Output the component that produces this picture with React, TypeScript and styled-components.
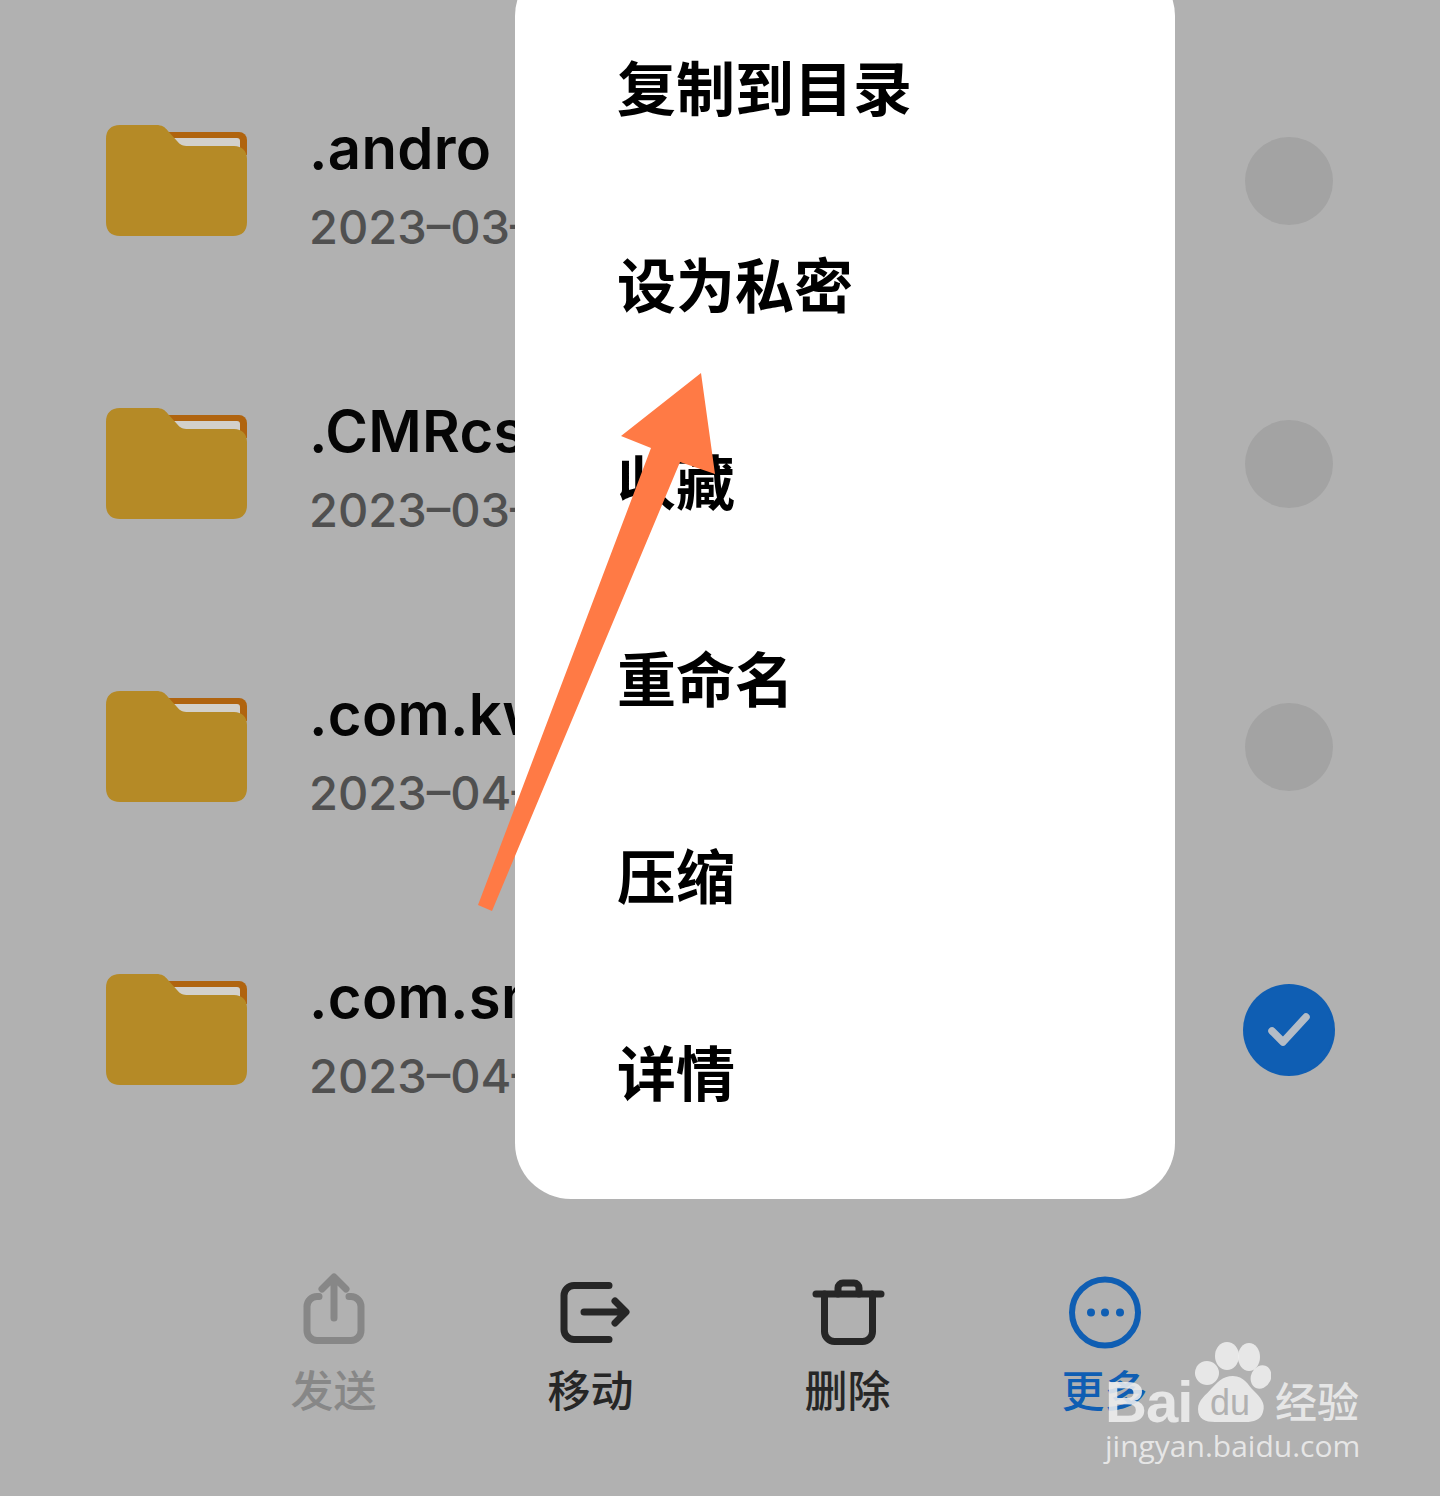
import React from "react";
import styled, { createGlobalStyle } from "styled-components";

const Global = createGlobalStyle`
  html, body { margin: 0; padding: 0; background: #b1b1b1; }
`;

const Screen = styled.div`
  position: relative;
  width: 1440px;
  height: 1496px;
  overflow: hidden;
  background: #b1b1b1;
  display: flex;
  flex-direction: column;
  font-family: Inter, "Noto Sans CJK SC", sans-serif;
`;

const List = styled.div`
  display: flex;
  flex-direction: column;
  padding-top: 39px;
`;

const Row = styled.div`
  height: 283px;
  display: flex;
  align-items: center;
  padding: 0 107px 0 106px;
`;

const FolderIcon = styled.svg`
  width: 141px;
  height: 111px;
  flex: none;
`;

const RowText = styled.div`
  flex: 1;
  margin-left: 62px;
  padding-top: 9px;
  display: flex;
  flex-direction: column;
  gap: 18px;
  white-space: nowrap;
`;

const Name = styled.div`
  font-size: 58px;
  line-height: 66px;
  font-weight: 600;
  letter-spacing: 0.3px;
  color: #050505;
`;

const DateText = styled.div`
  font-size: 47px;
  line-height: 56px;
  font-weight: 500;
  color: #505050;
`;

const Check = styled.div<{ $on?: boolean }>`
  flex: none;
  width: 88px;
  height: 88px;
  border-radius: 50%;
  background: ${(p) => (p.$on ? "#0f5eb3" : "#a3a3a3")};
  box-shadow: ${(p) => (p.$on ? "0 0 0 2px #0f5eb3" : "none")};
  display: flex;
  align-items: center;
  justify-content: center;
`;

const Toolbar = styled.div`
  margin-top: auto;
  padding: 0 0 83px 205px;
  display: flex;
`;

const Tool = styled.div<{ $color: string }>`
  width: 257px;
  display: flex;
  flex-direction: column;
  align-items: center;
  color: ${(p) => p.$color};
`;

const ToolIcon = styled.svg`
  width: 80px;
  height: 80px;
  fill: none;
  stroke: currentColor;
  stroke-width: 7;
  stroke-linecap: round;
  stroke-linejoin: round;
`;

const ToolLabel = styled.div`
  font-family: "Noto Sans CJK SC", sans-serif;
  font-size: 43px;
  line-height: 50px;
  font-weight: 500;
  margin-top: 13px;
`;

const Menu = styled.div`
  position: absolute;
  left: 515px;
  top: -40px;
  width: 660px;
  height: 1239px;
  box-sizing: border-box;
  padding: 27px 0 0 102px;
  background: #fff;
  border-radius: 56px;
  display: flex;
  flex-direction: column;
`;

const MenuItem = styled.div`
  height: 197px;
  display: flex;
  align-items: center;
  font-family: "Noto Sans CJK SC", sans-serif;
  font-size: 59px;
  font-weight: 700;
  color: #000;
`;

const Arrow = styled.svg`
  position: absolute;
  left: 470px;
  top: 365px;
  width: 255px;
  height: 555px;
`;

const Watermark = styled.div`
  position: absolute;
  left: 1105px;
  top: 1340px;
  width: 262px;
  color: rgba(238, 238, 238, 0.88);
  display: flex;
  flex-direction: column;
`;

const Brand = styled.div`
  display: flex;
  align-items: flex-end;
  height: 84px;
`;

const BrandLatin = styled.span`
  font-family: "Liberation Sans", sans-serif;
  font-weight: 700;
  font-size: 58px;
  line-height: 44px;
  letter-spacing: -1px;
  width: 90px;
  flex: none;
`;

const Paw = styled.svg`
  width: 76px;
  height: 84px;
  flex: none;
  margin-right: 4px;
`;

const BrandCjk = styled.span`
  font-family: "Noto Sans CJK SC", sans-serif;
  font-weight: 500;
  font-size: 42px;
  line-height: 48px;
  white-space: nowrap;
`;

const Domain = styled.div`
  font-family: "Open Sans", sans-serif;
  font-size: 30px;
  line-height: 40px;
  margin-top: 2px;
  white-space: nowrap;
`;

const Folder = () => (
  <FolderIcon viewBox="0 0 141 111">
    <path d="M55 7H133a8 8 0 0 1 8 8V30H55Z" fill="#b0640f" />
    <path d="M60 13H131a3 3 0 0 1 3 3V24H70Z" fill="#d2d0cb" />
    <path
      d="M14 0H50c6 0 9 2 12 6l9 10c3 4 6 5 11 5H128c8 0 13 5 13 13V97c0 9-5 14-14 14H14C5 111 0 106 0 97V14C0 5 5 0 14 0Z"
      fill="#b58a26"
    />
  </FolderIcon>
);

const rows = [
  { name: ".andro", date: "2023–03–28" },
  { name: ".CMRcs", date: "2023–03–28" },
  { name: ".com.kwai", date: "2023–04–02" },
  { name: ".com.smile", date: "2023–04–02", on: true },
];

const items = ["复制到目录", "设为私密", "收藏", "重命名", "压缩", "详情"];

export default function App() {
  return (
    <Screen>
      <Global />
      <List>
        {rows.map((r) => (
          <Row key={r.name}>
            <Folder />
            <RowText>
              <Name>{r.name}</Name>
              <DateText>{r.date}</DateText>
            </RowText>
            <Check $on={r.on}>
              {r.on && (
                <svg width="44" height="36" viewBox="0 0 44 36" fill="none">
                  <path
                    d="M5 19L16 30L39 5"
                    stroke="#b4bcc6"
                    strokeWidth="7.5"
                    strokeLinecap="round"
                    strokeLinejoin="round"
                  />
                </svg>
              )}
            </Check>
          </Row>
        ))}
      </List>

      <Toolbar>
        <Tool $color="#878787">
          <ToolIcon viewBox="0 0 80 80">
            <path d="M25 26.5H23a10 10 0 0 0-10 10V60.5a10 10 0 0 0 10 10H57a10 10 0 0 0 10-10V36.5a10 10 0 0 0-10-10H55" />
            <path d="M40 8V48M28 19L40 7L52 19" />
          </ToolIcon>
          <ToolLabel>发送</ToolLabel>
        </Tool>
        <Tool $color="#262626">
          <ToolIcon viewBox="0 0 80 80">
            <path d="M58 15.5H23a10 10 0 0 0-10 10V59.5a10 10 0 0 0 10 10H58" />
            <path d="M33 42H74M64 31L75 42L64 53" />
          </ToolIcon>
          <ToolLabel>移动</ToolLabel>
        </Tool>
        <Tool $color="#262626">
          <ToolIcon viewBox="0 0 80 80">
            <path d="M8 24H73" />
            <path d="M16.5 24V61.5a10 10 0 0 0 10 10H54.5a10 10 0 0 0 10-10V24" />
            <path d="M30 24V18a5 5 0 0 1 5-5H46a5 5 0 0 1 5 5V24" />
          </ToolIcon>
          <ToolLabel>删除</ToolLabel>
        </Tool>
        <Tool $color="#0f5eb3">
          <ToolIcon viewBox="0 0 80 80">
            <circle cx="40" cy="42.5" r="33" strokeWidth="6" />
            <circle cx="26" cy="42.5" r="4" fill="currentColor" stroke="none" />
            <circle cx="40" cy="42.5" r="4" fill="currentColor" stroke="none" />
            <circle cx="55" cy="42.5" r="4" fill="currentColor" stroke="none" />
          </ToolIcon>
          <ToolLabel>更多</ToolLabel>
        </Tool>
      </Toolbar>

      <Menu>
        {items.map((t) => (
          <MenuItem key={t}>{t}</MenuItem>
        ))}
      </Menu>

      <Arrow viewBox="0 0 255 555">
        <polygon
          points="231,8 151,71 181,83 8,540 22,546 210,97 245,109"
          fill="#ff7a45"
        />
      </Arrow>

      <Watermark>
        <Brand>
          <BrandLatin>Bai</BrandLatin>
          <Paw viewBox="0 0 76 84">
            <g fill="currentColor">
              <ellipse cx="32" cy="16" rx="12" ry="14" />
              <ellipse cx="54" cy="17" rx="11" ry="14" />
              <ellipse cx="12" cy="33" rx="12" ry="12" transform="rotate(-25 12 33)" />
              <ellipse cx="66" cy="37" rx="10" ry="12" transform="rotate(25 66 37)" />
              <path d="M38 36c11 0 15 9 21 15 6 6 12 12 9 21-2 8-10 10-17 10H20C10 82 3 79 3 69c0-9 8-14 13-20 6-6 11-13 22-13Z" />
            </g>
            <text
              x="35"
              y="75"
              textAnchor="middle"
              fontFamily="Liberation Sans, sans-serif"
              fontSize="36"
              fontWeight="400"
              fill="#b1b1b1"
            >
              du
            </text>
          </Paw>
          <BrandCjk>经验</BrandCjk>
        </Brand>
        <Domain>jingyan.baidu.com</Domain>
      </Watermark>
    </Screen>
  );
}
